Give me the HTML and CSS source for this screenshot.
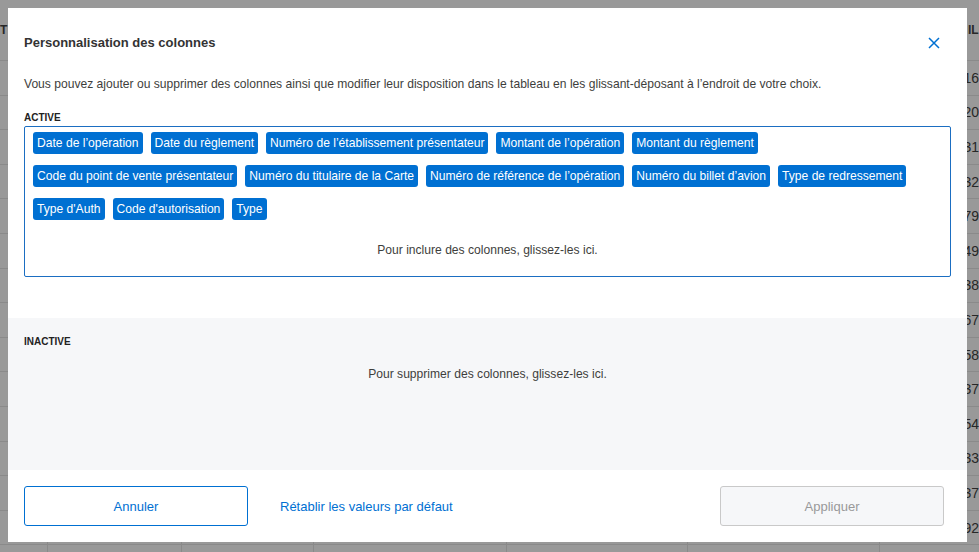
FILE: index.html
```html
<!DOCTYPE html>
<html>
<head>
<title>Personnalisation des colonnes</title>
<link rel="stylesheet" href="styles.css">
</head>
<body>

<div class="page">
  <table class="grid">
    <thead>
      <tr><th>T</th><th></th><th></th><th></th><th></th><th></th><th></th><th>MONTANT ILI</th></tr>
    </thead>
    <tbody id="grid-body">
    </tbody>
  </table>
</div>

<div class="backdrop"></div>

<div class="modal">
  <div class="modal-header">
    <h2 class="modal-title">Personnalisation des colonnes</h2>
    <button class="close-btn" aria-label="Fermer">
      <svg width="12" height="12" viewBox="0 0 12 12"><path d="M1 1 L11 11 M11 1 L1 11" stroke="#0070d2" stroke-width="1.5" fill="none"/></svg>
    </button>
  </div>

  <p class="intro">Vous pouvez ajouter ou supprimer des colonnes ainsi que modifier leur disposition dans le tableau en les glissant-déposant à l’endroit de votre choix.</p>

  <div class="zone active-zone">
    <h3 class="zone-label">ACTIVE</h3>
    <div class="drop-box">
      <div class="chip-list">
        <span class="chip">Date de l’opération</span>
        <span class="chip">Date du règlement</span>
        <span class="chip">Numéro de l’établissement présentateur</span>
        <span class="chip">Montant de l’opération</span>
        <span class="chip">Montant du règlement</span>
        <span class="chip">Code du point de vente présentateur</span>
        <span class="chip">Numéro du titulaire de la Carte</span>
        <span class="chip">Numéro de référence de l’opération</span>
        <span class="chip">Numéro du billet d’avion</span>
        <span class="chip">Type de redressement</span>
        <span class="chip">Type d'Auth</span>
        <span class="chip">Code d'autorisation</span>
        <span class="chip">Type</span>
      </div>
      <p class="drop-hint">Pour inclure des colonnes, glissez-les ici.</p>
    </div>
  </div>

  <div class="zone inactive-zone">
    <h3 class="zone-label">INACTIVE</h3>
    <p class="drop-hint">Pour supprimer des colonnes, glissez-les ici.</p>
  </div>

  <div class="modal-footer">
    <button class="btn btn-outline">Annuler</button>
    <a href="#" class="reset-link">Rétablir les valeurs par défaut</a>
    <button class="btn btn-disabled" disabled>Appliquer</button>
  </div>
</div>

<script>
  // rows of the table behind the overlay
  const endings = ['16', '20', '31', '32', '79', '49', '38', '67', '58', '37', '54', '33', '37', '92', '15'];
  const body = document.getElementById('grid-body');
  endings.forEach(end => {
    const row = document.createElement('tr');
    for (let i = 0; i < 8; i++) {
      const cell = document.createElement('td');
      if (i === 7) cell.textContent = '1 254,' + end;
      row.appendChild(cell);
    }
    body.appendChild(row);
  });
</script>
</body>
</html>
```

FILE: styles.css
```css
html, body {
  margin: 0;
  height: 100%;
  overflow: hidden;
}

body {
  font-family: "Liberation Sans", Arial, sans-serif;
  font-size: 12.1px;
  color: #3e3e3c;
  background: #fff;
}

/* table behind the dialog */
.page {
  height: 552px;
  overflow: hidden;
}

.grid {
  border-collapse: collapse;
  width: 1000px;
  table-layout: fixed;
  color: #444;
  font-size: 14px;
}

.grid th {
  height: 60px;
  text-align: left;
  font-size: 12px;
  font-weight: bold;
  border-bottom: 1px solid #e6e6e6;
  padding: 0;
  white-space: nowrap;
  overflow: hidden;
}

.grid th:last-child {
  text-align: right;
  padding-right: 18px;
}

.grid td {
  height: 33.6px;
  border-bottom: 1px solid #e6e6e6;
  border-right: 1px solid #e6e6e6;
  padding: 0;
}

.grid td:last-child {
  text-align: right;
  padding-right: 21px;
  border-right: none;
}

.grid th:nth-child(1), .grid td:nth-child(1) { width: 47px; }
.grid th:nth-child(2), .grid td:nth-child(2) { width: 134px; }
.grid th:nth-child(3), .grid td:nth-child(3) { width: 132px; }
.grid th:nth-child(4), .grid td:nth-child(4) { width: 193px; }
.grid th:nth-child(5), .grid td:nth-child(5) { width: 181px; }
.grid th:nth-child(6), .grid td:nth-child(6) { width: 192px; }
.grid th:nth-child(7), .grid td:nth-child(7) { width: 0; }

.backdrop {
  position: fixed;
  inset: 0;
  background: rgba(0, 0, 0, 0.4);
}

/* dialog */
.modal {
  position: absolute;
  top: 8px;
  left: 8px;
  width: 959px;
  height: 534px;
  background: #fff;
  display: flex;
  flex-direction: column;
}

.modal-header {
  display: flex;
  justify-content: space-between;
  align-items: center;
  padding: 27px 27px 0 16px;
}

.modal-title {
  margin: 0;
  font-size: 13px;
  line-height: 16px;
  font-weight: bold;
  color: #333;
}

.close-btn {
  border: none;
  background: none;
  padding: 0;
  width: 12px;
  height: 12px;
  display: flex;
  cursor: pointer;
}

.intro {
  margin: 25px 16px 0 16px;
  line-height: 16px;
}

.zone-label {
  margin: 0;
  font-size: 10px;
  line-height: 12px;
  font-weight: bold;
  color: #222;
}

.active-zone {
  padding: 20px 16px 0 16px;
  height: 206px;
}

.drop-box {
  margin-top: 2px;
  border: 1px solid #1b6ec2;
  border-radius: 2px;
  padding: 5px 8px 0 8px;
  box-sizing: border-box;
  height: 151px;
}

.chip-list {
  display: flex;
  flex-wrap: wrap;
  gap: 11px 8px;
}

.chip {
  background: #0070d2;
  color: #fff;
  border-radius: 3px;
  padding: 0 4px;
  height: 22px;
  line-height: 22px;
  white-space: nowrap;
}

.drop-hint {
  margin: 22px 0 0 0;
  line-height: 16px;
  text-align: center;
  color: #3e3e3c;
}

.inactive-zone {
  background: #f6f7f9;
  padding: 18px 16px 0 16px;
  height: 152px;
  box-sizing: border-box;
}

.inactive-zone .drop-hint {
  margin-top: 18px;
}

.modal-footer {
  display: flex;
  align-items: center;
  padding: 16px 23px 0 16px;
  font-size: 13px;
}

.btn {
  width: 224px;
  height: 40px;
  border-radius: 3px;
  font-family: inherit;
  font-size: 13px;
  background: #fff;
}

.btn-outline {
  border: 1px solid #0070d2;
  color: #0070d2;
  cursor: pointer;
}

.btn-disabled {
  margin-left: auto;
  border: 1px solid #c9c9c9;
  background: #f6f7f9;
  color: #999;
}

.reset-link {
  margin-left: 32px;
  color: #0070d2;
  text-decoration: none;
}
```
